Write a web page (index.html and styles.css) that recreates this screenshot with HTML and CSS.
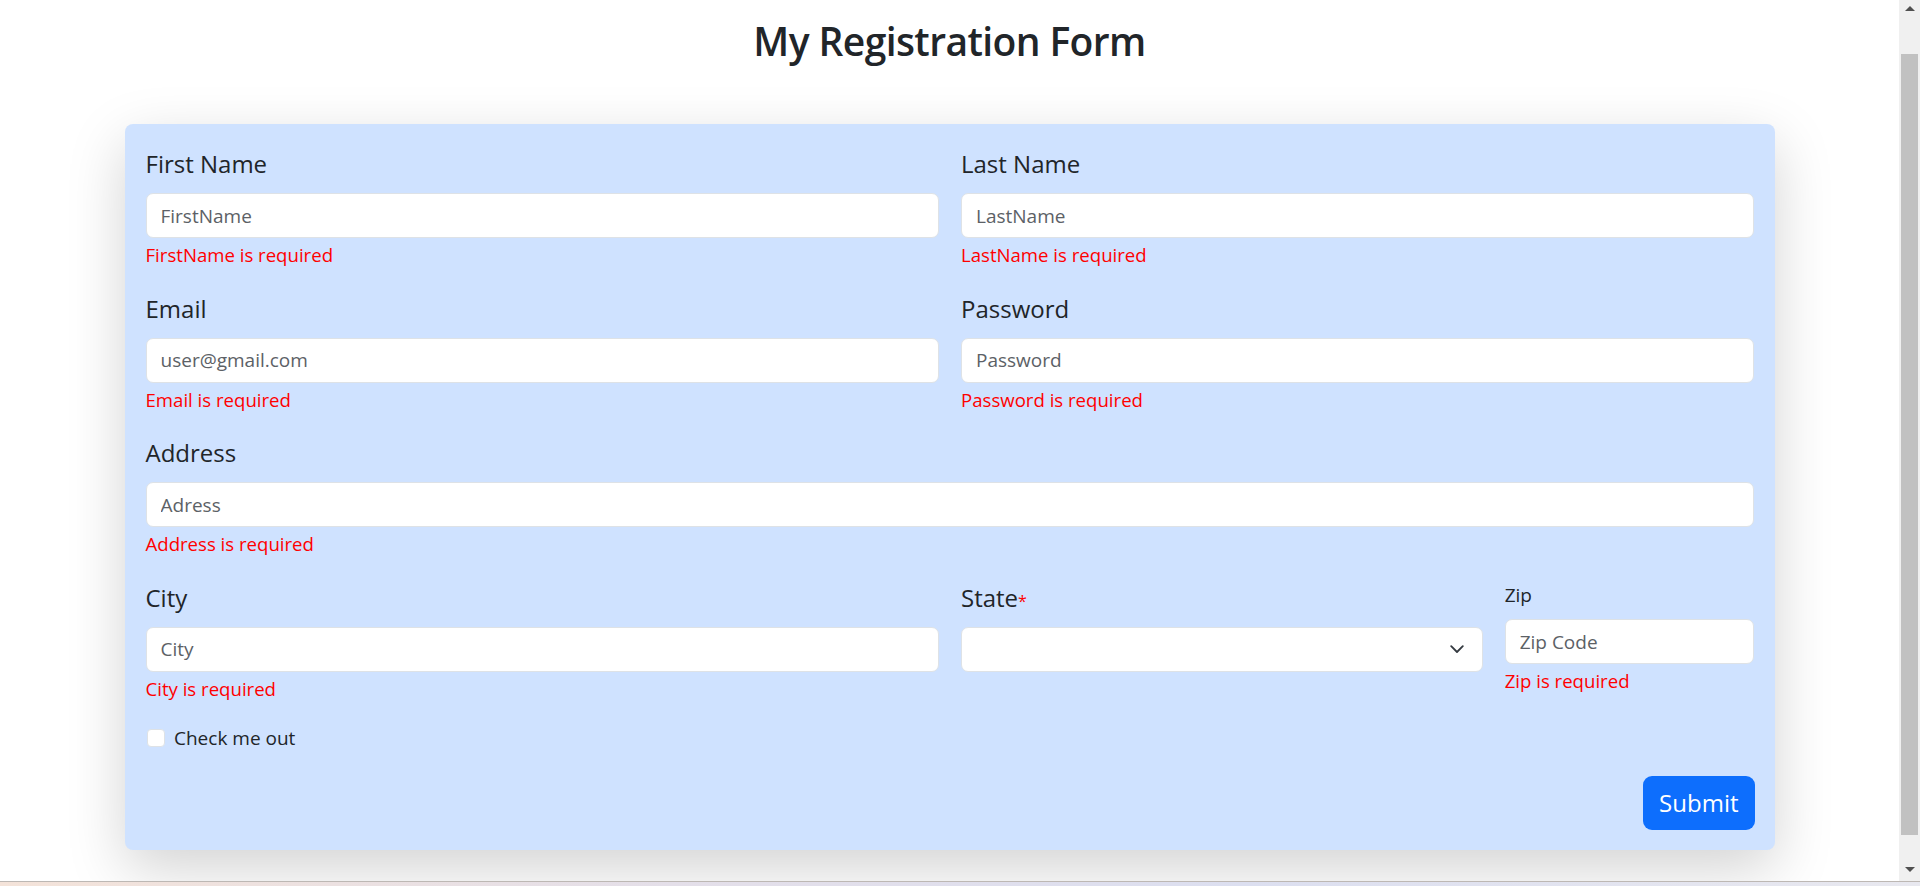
FILE: index.html
```html
<!DOCTYPE html>
<html lang="en">
<head>
<meta charset="utf-8">
<title>My Registration Form</title>
<link rel="stylesheet" href="styles.css">
</head>
<body>
<div class="screen">
  <div class="window">
    <main class="page">
      <h1 class="title">My Registration Form</h1>
      <form class="card">
        <div class="grid">
          <div class="field span-6">
            <label class="label" for="fn">First Name</label>
            <input class="control" id="fn" type="text" placeholder="FirstName">
            <div class="error">FirstName is required</div>
          </div>
          <div class="field span-6">
            <label class="label" for="ln">Last Name</label>
            <input class="control" id="ln" type="text" placeholder="LastName">
            <div class="error">LastName is required</div>
          </div>
          <div class="field span-6">
            <label class="label" for="em">Email</label>
            <input class="control" id="em" type="email" placeholder="user@gmail.com">
            <div class="error">Email is required</div>
          </div>
          <div class="field span-6">
            <label class="label" for="pw">Password</label>
            <input class="control" id="pw" type="password" placeholder="Password">
            <div class="error">Password is required</div>
          </div>
          <div class="field span-12">
            <label class="label" for="ad">Address</label>
            <input class="control" id="ad" type="text" placeholder="Adress">
            <div class="error">Address is required</div>
          </div>
          <div class="field span-6">
            <label class="label" for="ci">City</label>
            <input class="control" id="ci" type="text" placeholder="City">
            <div class="error">City is required</div>
          </div>
          <div class="field span-4">
            <label class="label" for="st">State<span class="req">*</span></label>
            <div class="select-wrap">
              <select class="control select" id="st">
                <option value=""></option>
              </select>
              <svg class="chevron" width="14" height="9" viewBox="0 0 14 9" aria-hidden="true">
                <path d="M1.2 1.2 L7 7 L12.8 1.2" fill="none" stroke="#343a40" stroke-width="1.8" stroke-linecap="round" stroke-linejoin="round"/>
              </svg>
            </div>
          </div>
          <div class="field span-2">
            <label class="label label-sm" for="zp">Zip</label>
            <input class="control" id="zp" type="text" placeholder="Zip Code">
            <div class="error">Zip is required</div>
          </div>
        </div>
        <label class="check">
          <input class="check-input" type="checkbox">
          <span class="check-text">Check me out</span>
        </label>
        <div class="actions">
          <button class="btn" type="button">Submit</button>
        </div>
      </form>
    </main>
    <div class="scrollbar" aria-hidden="true">
      <div class="sb-btn"><span class="tri tri-up"></span></div>
      <div class="sb-track"><div class="sb-thumb"></div></div>
      <div class="sb-btn sb-btn-down"><span class="tri tri-down"></span></div>
    </div>
  </div>
  <div class="taskbar-edge"></div>
</div>
</body>
</html>
```

FILE: styles.css
```css
* {
  box-sizing: border-box;
}

html,
body {
  margin: 0;
  padding: 0;
}

body {
  width: 1920px;
  height: 886px;
  overflow: hidden;
  background: #fff;
  color: #212529;
  font-family: "Open Sans", "Noto Sans", sans-serif;
}

.screen {
  display: flex;
  flex-direction: column;
  height: 886px;
}

.window {
  display: flex;
  height: 881px;
}

.page {
  flex: 1;
  overflow: hidden;
  background: #fff;
}

.title {
  margin: 17px 0 0;
  text-align: center;
  font-size: 39px;
  line-height: 48px;
  font-weight: 600;
  letter-spacing: -0.6px;
}

.card {
  width: 1650px;
  margin: 59px auto 0;
  padding: 22px 20px 20px 21px;
  background: #cfe2ff;
  border-radius: 8px;
  box-shadow: 0 19px 58px rgba(0, 0, 0, 0.175);
}

.grid {
  display: grid;
  grid-template-columns: repeat(12, 1fr);
  column-gap: 22px;
  row-gap: 20.5px;
}

.span-12 { grid-column: span 12; }
.span-6 { grid-column: span 6; }
.span-4 { grid-column: span 4; }
.span-2 { grid-column: span 2; }

.field {
  display: flex;
  flex-direction: column;
}

.label {
  font-size: 24px;
  line-height: 36px;
  margin-bottom: 11px;
}

.label-sm {
  font-size: 19px;
  line-height: 30px;
  margin-bottom: 9.5px;
}

.req {
  color: #ff0000;
  font-size: 16px;
  line-height: 1;
}

.control {
  display: block;
  width: 100%;
  height: 45px;
  margin: 0;
  padding: 0 14px;
  border: 1px solid #dee2e6;
  border-radius: 7px;
  background: #fff;
  color: #212529;
  font-family: inherit;
  font-size: 19px;
  outline: none;
}

.control::placeholder {
  color: #5c6166;
  opacity: 1;
}

.select-wrap {
  position: relative;
}

.select {
  appearance: none;
  -webkit-appearance: none;
  padding-right: 40px;
}

.chevron {
  position: absolute;
  right: 19px;
  top: 50%;
  margin-top: -4px;
  pointer-events: none;
}

.error {
  padding-top: 2px;
  color: #ff0000;
  font-size: 18.6px;
  line-height: 30px;
}

.check {
  display: flex;
  align-items: flex-start;
  gap: 9.5px;
  margin-top: 20.5px;
}

.check-input {
  appearance: none;
  -webkit-appearance: none;
  width: 18px;
  height: 18px;
  margin: 5px 0 0 1px;
  background: #fff;
  border: 1px solid #dee2e6;
  border-radius: 4px;
  flex: none;
}

.check-text {
  font-size: 19px;
  line-height: 28.8px;
}

.actions {
  display: flex;
  justify-content: flex-end;
  margin-top: 23px;
}

.btn {
  display: flex;
  align-items: center;
  justify-content: center;
  height: 54px;
  padding: 0 16px;
  border: none;
  border-radius: 9px;
  background: #0d6efd;
  color: #fff;
  font-family: inherit;
  font-size: 24px;
  line-height: 1;
}

.scrollbar {
  display: flex;
  flex-direction: column;
  width: 21px;
  background: #f0f0f0;
}

.sb-btn {
  display: flex;
  align-items: center;
  justify-content: center;
  height: 17px;
}

.sb-btn-down {
  margin-bottom: 3px;
}

.sb-track {
  flex: 1;
  padding: 37px 2px 0;
}

.sb-thumb {
  height: 781px;
  background: #c1c1c1;
}

.tri {
  width: 0;
  height: 0;
  border-left: 5px solid transparent;
  border-right: 5px solid transparent;
}

.tri-up {
  border-bottom: 5px solid #505050;
}

.tri-down {
  border-top: 5px solid #505050;
}

.taskbar-edge {
  height: 5px;
  border-top: 1px solid #bdb8b4;
  background: linear-gradient(90deg, #f4e3d9 0%, #e4dfe9 35%, #dcdff0 65%, #e8e8ef 100%);
}
```
